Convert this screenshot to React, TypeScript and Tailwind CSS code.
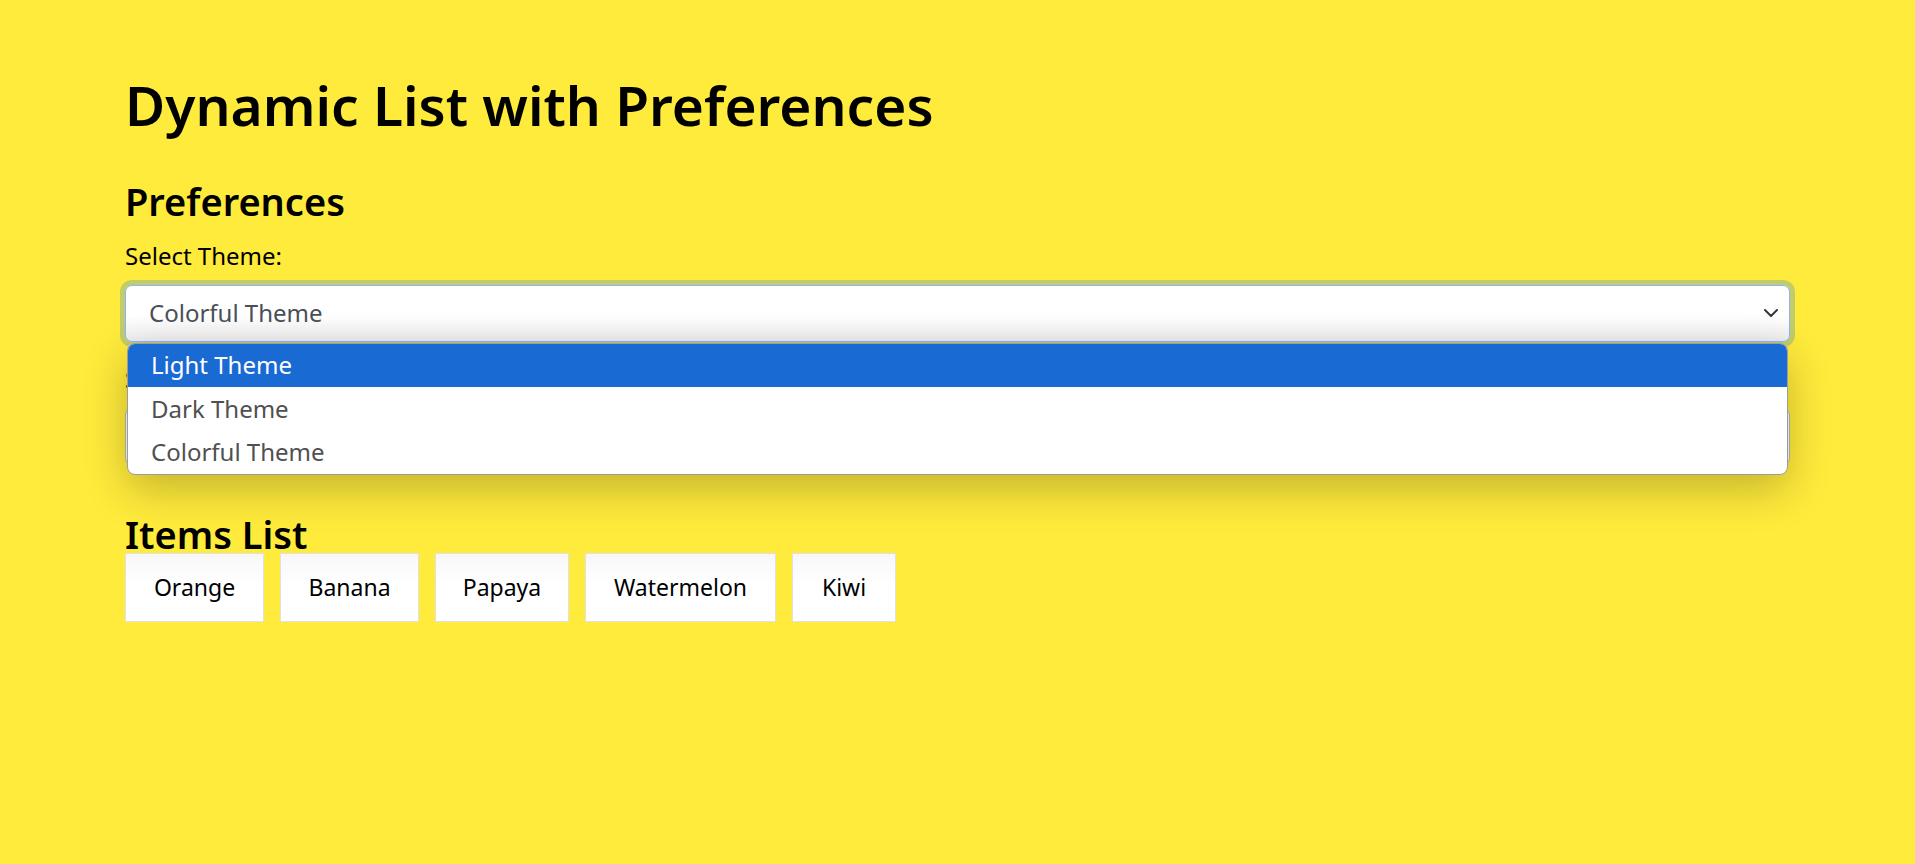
const themes = ['Light Theme', 'Dark Theme', 'Colorful Theme'];

const items = [
  { name: 'Orange', w: 'w-[139px]' },
  { name: 'Banana', w: 'w-[139px]' },
  { name: 'Papaya', w: 'w-[134px]' },
  { name: 'Watermelon', w: 'w-[191px]' },
  { name: 'Kiwi', w: 'w-[104px]' },
];

function Chevron() {
  return (
    <svg width="14" height="8" viewBox="0 0 14 8" fill="none" className="shrink-0">
      <path d="M1 1l6 6 6-6" stroke="#343a40" strokeWidth="2" strokeLinecap="round" strokeLinejoin="round" />
    </svg>
  );
}

export default function App() {
  return (
    <div className="min-h-screen bg-[#ffeb3b] text-black font-['Noto_Sans',sans-serif]">
      <div className="px-[125px] pt-[72px]">
        <h1 className="text-[55px] leading-[1.2] font-semibold">Dynamic List with Preferences</h1>

        <h3 className="mt-[41px] text-[38px] leading-[1.2] font-semibold">Preferences</h3>

        <div className="relative">
          <label className="mt-[13px] block text-[24px] leading-[1.5]">Select Theme:</label>
          <div className="relative mt-[11px]">
            <div className="flex h-[57px] items-center justify-between rounded-[7px] border-[1.5px] border-[#86b7fe] bg-[linear-gradient(to_bottom,#ffffff_55%,#ededed)] pl-[23px] pr-[7px] text-[24px] text-[#495057] shadow-[0_0_0_5px_rgba(13,110,253,0.25)]">
              <span>Colorful Theme</span>
              <span className="mr-[1px] flex w-[20px] justify-center">
                <Chevron />
              </span>
            </div>

            {/* open native dropdown */}
            <ul className="absolute left-[2px] right-[2px] top-[58px] z-10 overflow-hidden rounded-[8px] border border-[#9c9c9c] bg-white text-[24px] text-[#505050] shadow-[0_14px_44px_rgba(0,0,0,0.24)]">
              {themes.map((t, i) => (
                <li
                  key={t}
                  className={
                    i === 0
                      ? 'flex h-[43px] items-center bg-[#1a6ad3] pl-[23px] text-white'
                      : i === 1
                        ? 'flex h-[44px] items-center pl-[23px]'
                        : 'flex h-[43px] items-center pl-[23px]'
                  }
                >
                  {t}
                </li>
              ))}
            </ul>
          </div>

          <label className="mt-[19px] block text-[24px] leading-[1.5]">Sort Order:</label>
          <div className="mt-[11px] h-[57px] rounded-[7px] border-[1.5px] border-[#b5b5b5] bg-white" />
        </div>

        <h3 className="mt-[50px] text-[38px] leading-none font-semibold">Items List</h3>
        <div className="flex gap-4">
          {items.map((it) => (
            <div
              key={it.name}
              className={`${it.w} flex h-[69px] items-center justify-center border-[1.5px] border-[#dee2e6] bg-[linear-gradient(to_bottom,#f7f7f7,#ffffff_45%)] text-[23px]`}
            >
              {it.name}
            </div>
          ))}
        </div>
      </div>
    </div>
  );
}
